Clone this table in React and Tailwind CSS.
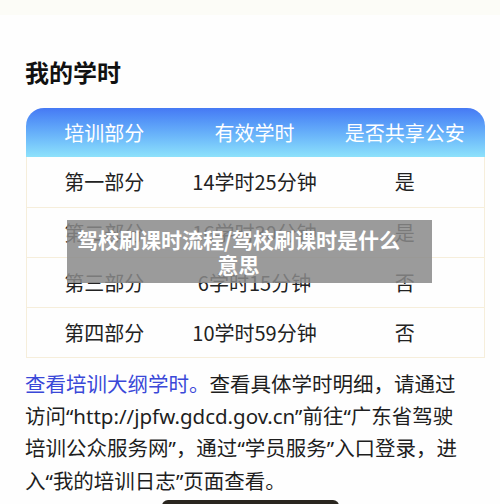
import React from "react";

const rows = [
  ["第一部分", "14学时25分钟", "是"],
  ["第二部分", "16学时30分钟", "是"],
  ["第三部分", "6学时15分钟", "否"],
  ["第四部分", "10学时59分钟", "否"],
];

// narrow curly quotes like the reference's system font
function Q({ children }) {
  return <span style={{ fontFamily: '"Noto Sans", sans-serif' }}>{children}</span>;
}

export default function App() {
  return (
    <div
      className="relative w-[500px] h-[504px] overflow-hidden bg-[#fefefe] text-[#1c1c1c]"
      style={{ fontFamily: '"Noto Sans CJK SC", "Noto Sans", sans-serif' }}
    >
      <div className="h-[15px] bg-[#fcfcf7]" />

      {/* title */}
      <h1 className="mt-[42px] ml-[25px] text-[24px] leading-[30px] font-bold text-[#111]">
        我的学时
      </h1>

      {/* table */}
      <div className="mt-[21px] mx-[26px] w-[459px]">
        <div className="grid grid-cols-3 h-[49px] items-center rounded-t-[18px] bg-gradient-to-b from-[#4679f4] to-[#8ee2fb] text-white text-[20px] pl-[3px] pr-[5px]">
          <div className="text-center">培训部分</div>
          <div className="text-center">有效学时</div>
          <div className="text-center">是否共享公安</div>
        </div>
        <div className="border-x border-b border-[#f6eedb]">
          {rows.map((r, i) => (
            <div
              key={i}
              className={`grid grid-cols-3 h-[50px] items-center text-[20px] text-[#222] pl-[2px] pr-[4px] ${
                i > 0 ? "border-t border-[#f6eedb]" : ""
              }`}
            >
              <div className="text-center">{r[0]}</div>
              <div className="text-center">{r[1]}</div>
              <div className="text-center">{r[2]}</div>
            </div>
          ))}
        </div>
      </div>

      {/* paragraph */}
      <p className="mt-[10px] ml-[25px] text-[20.5px] leading-[31.7px] text-[#1e1e1e] whitespace-nowrap">
        <span className="text-[#3a48d8]">查看培训大纲学时。</span>
        查看具体学时明细，请通过
        <br />
        访问<Q>“http://jpfw.gdcd.gov.cn”</Q>前往<Q>“</Q>广东省驾驶
        <br />
        培训公众服务网<Q>”</Q>，通过<Q>“</Q>学员服务<Q>”</Q>入口登录，进
        <br />
        入<Q>“</Q>我的培训日志<Q>”</Q>页面查看。
      </p>

      {/* bottom dark bar */}
      <div className="absolute left-[162px] top-[500px] w-[177px] h-[12px] rounded-[6px] bg-[#2a261f]" />

      {/* overlay caption */}
      <div className="absolute left-[67px] top-[220px] w-[365px] h-[63px] bg-[#8a8a8a]/85 flex items-center justify-center pl-[4px] pr-[26px]">
        <p className="text-center text-white font-bold text-[21px] leading-[25px] whitespace-nowrap">
          驾校刷课时流程/驾校刷课时是什么
          <br />
          意思
        </p>
      </div>
    </div>
  );
}
